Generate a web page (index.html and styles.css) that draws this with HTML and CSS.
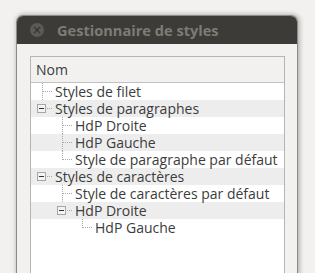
FILE: index.html
```html
<!DOCTYPE html>
<html lang="fr">
<head>
    <meta charset="UTF-8">
    <title>Gestionnaire de styles</title>
    <link rel="stylesheet" href="styles.css">
</head>
<body>
    <div class="window">
        <div class="titlebar">
            <div class="close">&times;</div>
            <div class="title">Gestionnaire de styles</div>
        </div>
        <div class="content">
            <div class="tree">
                <div class="tree-head">Nom</div>
                <div class="row">
                    <span class="g tee"></span>
                    <span class="label">Styles de filet</span>
                </div>
                <div class="row alt">
                    <span class="g exp"><i class="box"></i></span>
                    <span class="label">Styles de paragraphes</span>
                </div>
                <div class="row">
                    <span class="g"></span><span class="g tee"></span>
                    <span class="label">HdP Droite</span>
                </div>
                <div class="row alt">
                    <span class="g"></span><span class="g tee"></span>
                    <span class="label">HdP Gauche</span>
                </div>
                <div class="row">
                    <span class="g"></span><span class="g end"></span>
                    <span class="label">Style de paragraphe par défaut</span>
                </div>
                <div class="row alt">
                    <span class="g exp"><i class="box"></i></span>
                    <span class="label">Styles de caractères</span>
                </div>
                <div class="row">
                    <span class="g"></span><span class="g tee"></span>
                    <span class="label">Style de caractères par défaut</span>
                </div>
                <div class="row alt">
                    <span class="g"></span><span class="g exp"><i class="box"></i></span>
                    <span class="label">HdP Droite</span>
                </div>
                <div class="row">
                    <span class="g"></span><span class="g"></span><span class="g end"></span>
                    <span class="label">HdP Gauche</span>
                </div>
            </div>
        </div>
    </div>
</body>
</html>
```

FILE: styles.css
```css
html, body {
    margin: 0;
    height: 100%;
    overflow: hidden;
}
body {
    background-color: #f2f1f0;
    font-family: "Open Sans", "DejaVu Sans", sans-serif;
    font-size: 14px;
    color: #3c3c3c;
}
.window {
    margin: 16px 0 0 17px;
    width: 280px;
    height: 257px;
    background-color: #f2f1f0;
    border-radius: 6px 6px 0 0;
    box-shadow: 0 0 0 1px #8a8a88, 1px 0 4px 2px rgba(0, 0, 0, 0.25);
}
.titlebar {
    height: 28px;
    background-color: #3c3b37;
    border-radius: 6px 6px 0 0;
    display: flex;
    align-items: center;
}
.close {
    width: 14px;
    height: 14px;
    margin-left: 13px;
    border-radius: 50%;
    background-color: #5b5a56;
    color: #2e2d2a;
    font-family: "DejaVu Sans", sans-serif;
    font-size: 12px;
    line-height: 14px;
    text-align: center;
}
.title {
    margin-left: 13px;
    font-weight: bold;
    font-size: 14.6px;
    color: #7c7b76;
}
.content {
    padding: 12px 12px 0 13px;
}
.tree {
    border: 1px solid #b5b5b3;
    border-bottom: none;
    height: 217px;
    background-color: #fff;
}
.tree-head {
    height: 25px;
    line-height: 26px;
    padding-left: 5px;
    background-color: #f2f1f0;
    border-bottom: 1px solid #c2c2c0;
}
.row {
    display: flex;
    height: 17px;
    line-height: 17px;
    padding-left: 1px;
    white-space: nowrap;
}
.row.alt {
    background-color: #ededed;
}
.label {
    padding-left: 3px;
}
.g {
    width: 20px;
    flex: none;
    position: relative;
}
.tee::before, .end::before {
    content: "";
    position: absolute;
    left: 10px;
    top: 0;
    height: 17px;
    border-left: 1px dotted #a8a8a8;
}
.end::before {
    height: 9px;
}
.tee::after, .end::after, .exp::after {
    content: "";
    position: absolute;
    left: 11px;
    top: 8px;
    width: 9px;
    border-top: 1px dotted #a8a8a8;
}
.exp::after {
    left: 15px;
    width: 5px;
}
.box {
    position: absolute;
    left: 5px;
    top: 4px;
    width: 9px;
    height: 9px;
    box-sizing: border-box;
    border: 1px solid #a6a6a4;
    background-color: #f4f4f2;
}
.box::before {
    content: "";
    position: absolute;
    left: 1px;
    top: 3px;
    width: 5px;
    height: 1px;
    background-color: #333;
}
```
